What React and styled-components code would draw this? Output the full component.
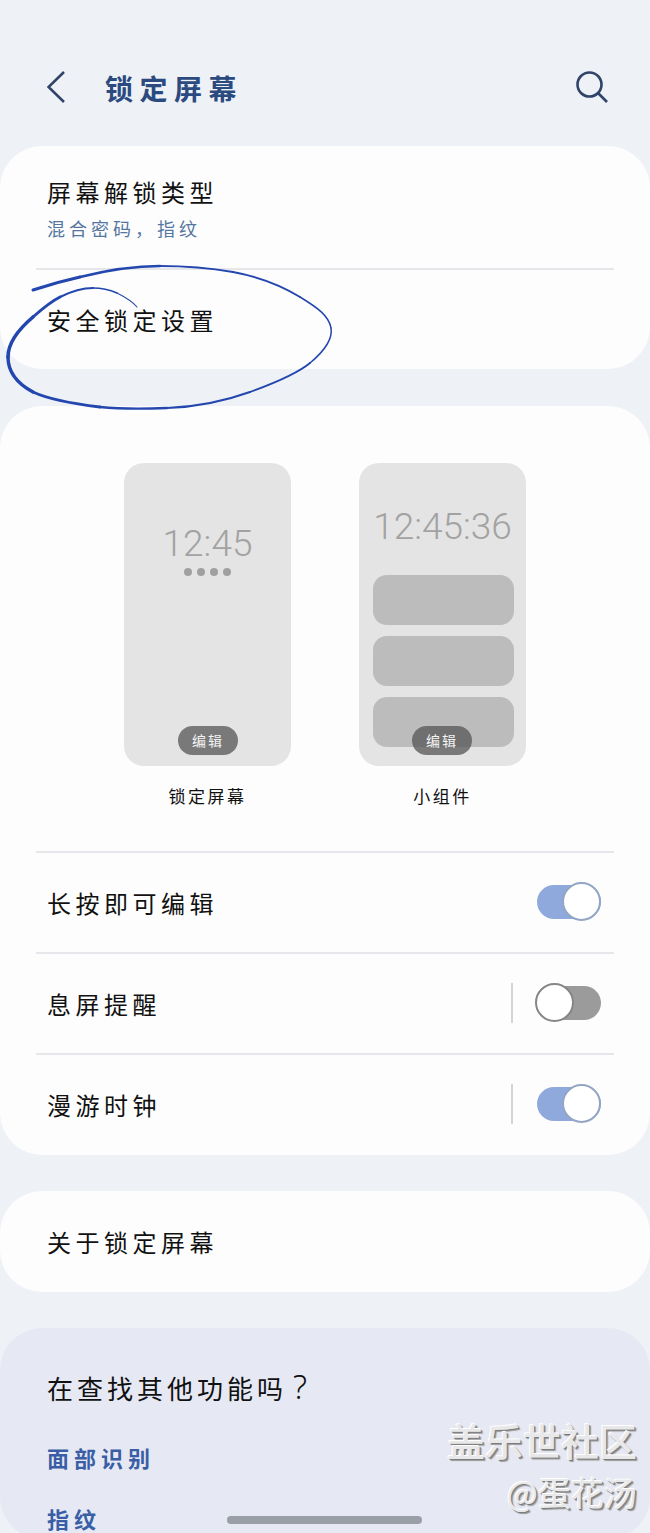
import React from 'react';
import styled, { createGlobalStyle } from 'styled-components';

const GlobalStyle = createGlobalStyle`
  html, body {
    margin: 0;
    padding: 0;
    background: #eef1f6;
  }
  body {
    font-family: "Noto Sans CJK SC", "Noto Sans", sans-serif;
  }
`;

// pen stroke pieces, the width changes along the line
const scribbleParts = [
  [3, 'M33 290 C48 285 62 281 80 277'],
  [2.6, 'M80 277 C100 272 130 266 160 266'],
  [2.2, 'M160 266 C185 266 210 268 233 272'],
  [1.8, 'M233 272 C260 277 282 286 300 297'],
  [1.5, 'M300 297 C318 308 329 316 331 328'],
  [1.5, 'M331 328 C333 340 322 353 310 363'],
  [1.8, 'M310 363 C298 373 272 384 250 392'],
  [2.1, 'M250 392 C225 401 196 407 167 408'],
  [2.4, 'M167 408 C143 409 120 409 100 407'],
  [2.8, 'M100 407 C75 404 50 400 33 392'],
  [3.4, 'M33 392 C18 384 8 372 8 357'],
  [3.6, 'M8 357 C8 343 20 328 33 317'],
  [3, 'M33 317 C42 309 50 302 60 297'],
  [2.2, 'M60 297 C70 292 82 288 93 288'],
  [1.6, 'M93 288 C101 288 110 290 117 293'],
  [1.1, 'M117 293 C125 297 132 301 137 307'],
];

const Toggle = ({ on }) => (
  <ToggleTrack $on={on}>
    <ToggleThumb $on={on} />
  </ToggleTrack>
);

const SwitchRow = ({ label, on, separated }) => (
  <SwitchRowWrap>
    <RowTitle>{label}</RowTitle>
    <SwitchSide>
      {separated && <VerticalLine />}
      <Toggle on={on} />
    </SwitchSide>
  </SwitchRowWrap>
);

const App = () => {
  return (
    <Page>
      <GlobalStyle />
      <Header>
        <BackIcon viewBox="0 0 18 32">
          <path d="M17 1 L1.5 16 L17 31" />
        </BackIcon>
        <Title>锁定屏幕</Title>
        <SearchIcon viewBox="0 0 32 32">
          <circle cx="13.5" cy="13.5" r="12" />
          <path d="M22 22 L31 31" />
        </SearchIcon>
      </Header>

      <Card>
        <UnlockRow>
          <RowTitle>屏幕解锁类型</RowTitle>
          <RowSub>混合密码，指纹</RowSub>
        </UnlockRow>
        <Divider />
        <SecureRow>
          <RowTitle>安全锁定设置</RowTitle>
        </SecureRow>
      </Card>

      <PreviewCard>
        <Previews>
          <PreviewItem>
            <Phone>
              <LockTime>12:45</LockTime>
              <Dots>
                <Dot />
                <Dot />
                <Dot />
                <Dot />
              </Dots>
              <EditPill $left={54}>编辑</EditPill>
            </Phone>
            <PreviewLabel>锁定屏幕</PreviewLabel>
          </PreviewItem>
          <PreviewItem>
            <Phone>
              <WidgetTime>12:45:36</WidgetTime>
              <Widgets>
                <Widget />
                <Widget />
                <Widget />
              </Widgets>
              <EditPill $left={53}>编辑</EditPill>
            </Phone>
            <PreviewLabel>小组件</PreviewLabel>
          </PreviewItem>
        </Previews>
        <Divider />
        <SwitchRow label="长按即可编辑" on />
        <Divider />
        <SwitchRow label="息屏提醒" separated />
        <Divider />
        <SwitchRow label="漫游时钟" on separated />
      </PreviewCard>

      <Card>
        <AboutRow>
          <RowTitle>关于锁定屏幕</RowTitle>
        </AboutRow>
      </Card>

      <LinksCard>
        <LinksTitle>
          在查找其他功能吗<QuestionMark>?</QuestionMark>
        </LinksTitle>
        <LinkList>
          <LinkText>面部识别</LinkText>
          <LinkText>指纹</LinkText>
        </LinkList>
      </LinksCard>

      <Scribble viewBox="0 0 650 420">
        {scribbleParts.map(([w, d]) => (
          <ScribblePath key={d} $w={w} d={d} />
        ))}
      </Scribble>

      <Watermark>
        <WatermarkMain>盖乐世社区</WatermarkMain>
        <WatermarkSub>@蛋花汤</WatermarkSub>
      </Watermark>
      <HomeBar />
    </Page>
  );
};

export default App;

const Page = styled.div`
  position: relative;
  width: 650px;
  height: 1533px;
  overflow: hidden;
  background: #eef1f6;
`;

const Header = styled.header`
  display: flex;
  align-items: center;
  height: 146px;
  padding: 28px 42px 0 47px;
  box-sizing: border-box;
`;

const BackIcon = styled.svg`
  width: 18px;
  height: 32px;
  fill: none;
  stroke: #2f4468;
  stroke-width: 2.6;
`;

const Title = styled.h1`
  margin: 2px 0 0 40px;
  font-size: 28px;
  font-weight: 700;
  letter-spacing: 6.5px;
  color: #2b4a80;
`;

const SearchIcon = styled.svg`
  width: 32px;
  height: 32px;
  margin-left: auto;
  fill: none;
  stroke: #2f4468;
  stroke-width: 2.6;
`;

const Card = styled.section`
  background: #fdfdfe;
  border-radius: 42px;
  overflow: hidden;
`;

const Divider = styled.div`
  height: 2px;
  margin: 0 36px;
  background: #e6e7ea;
`;

const UnlockRow = styled.div`
  display: flex;
  flex-direction: column;
  justify-content: center;
  height: 122px;
  padding: 2px 47px 0;
  box-sizing: border-box;
`;

const SecureRow = styled.div`
  display: flex;
  align-items: center;
  height: 99px;
  padding: 0 47px;
  box-sizing: border-box;
`;

const AboutRow = styled.div`
  display: flex;
  align-items: center;
  height: 101px;
  padding: 0 47px;
  box-sizing: border-box;
`;

const RowTitle = styled.div`
  font-size: 24px;
  line-height: 34px;
  letter-spacing: 4.5px;
  color: #111;
`;

const RowSub = styled.div`
  margin-top: 6px;
  font-size: 18px;
  line-height: 26px;
  letter-spacing: 4px;
  color: #55779f;
`;

const PreviewCard = styled.section`
  margin: 37px 0 36px;
  padding: 57px 0 1px;
  background: #fdfdfe;
  border-radius: 42px;
  overflow: hidden;
`;

const Previews = styled.div`
  display: flex;
  justify-content: center;
  gap: 68px;
  height: 388px;
`;

const PreviewItem = styled.div`
  display: flex;
  flex-direction: column;
  align-items: center;
`;

const Phone = styled.div`
  position: relative;
  display: flex;
  flex-direction: column;
  align-items: center;
  width: 167px;
  height: 303px;
  background: #e4e4e4;
  border-radius: 20px;
`;

const LockTime = styled.div`
  margin-top: 56px;
  font-family: Roboto, sans-serif;
  font-weight: 300;
  font-size: 37px;
  line-height: 50px;
  color: #a2a2a2;
`;

const Dots = styled.div`
  display: flex;
  gap: 5px;
  margin-top: -1px;
`;

const Dot = styled.span`
  width: 8px;
  height: 8px;
  border-radius: 50%;
  background: #a0a0a0;
`;

const WidgetTime = styled.div`
  margin-top: 39px;
  font-family: Roboto, sans-serif;
  font-weight: 300;
  font-size: 37px;
  line-height: 50px;
  color: #a2a2a2;
`;

const Widgets = styled.div`
  display: flex;
  flex-direction: column;
  gap: 11px;
  margin: 23px 0 0 2px;
`;

const Widget = styled.div`
  width: 141px;
  height: 50px;
  background: #bcbcbc;
  border-radius: 14px;
`;

const EditPill = styled.div`
  position: absolute;
  left: ${({ $left }) => $left}px;
  bottom: 11px;
  width: 60px;
  height: 29px;
  border-radius: 15px;
  background: rgba(85, 85, 85, 0.75);
  color: #f4f4f4;
  font-size: 14px;
  line-height: 29px;
  letter-spacing: 2px;
  text-align: center;
`;

const PreviewLabel = styled.div`
  margin-top: 17px;
  font-size: 17px;
  line-height: 26px;
  letter-spacing: 2.5px;
  color: #111;
`;

const SwitchRowWrap = styled.div`
  display: flex;
  align-items: center;
  justify-content: space-between;
  height: 99px;
  padding: 0 49px 0 47px;
  box-sizing: border-box;
`;

const SwitchSide = styled.div`
  display: flex;
  align-items: center;
  margin-bottom: 2px;
`;

const VerticalLine = styled.span`
  width: 2px;
  height: 40px;
  margin-right: 24px;
  background: #d4d4d6;
`;

const ToggleTrack = styled.div`
  position: relative;
  width: 64px;
  height: 34px;
  border-radius: 17px;
  background: ${({ $on }) => ($on ? '#8fa9dd' : '#9b9b9b')};
`;

const ToggleThumb = styled.span`
  position: absolute;
  top: -3px;
  ${({ $on }) => ($on ? 'right: 0;' : 'left: -2px;')}
  width: 39px;
  height: 39px;
  box-sizing: border-box;
  border-radius: 50%;
  background: #fff;
  border: 2px solid ${({ $on }) => ($on ? '#93a5c4' : '#868686')};
`;

const LinksCard = styled.section`
  height: 211px;
  margin-top: 36px;
  padding: 40px 47px 0;
  box-sizing: border-box;
  background: #e6e9f3;
  border-radius: 42px;
`;

const LinksTitle = styled.div`
  font-size: 26px;
  line-height: 38px;
  letter-spacing: 4px;
  color: #111;
`;

const QuestionMark = styled.span`
  margin-left: 6px;
  font-family: "Noto Sans", sans-serif;
  font-size: 33px;
  font-weight: 300;
`;

const LinkList = styled.div`
  display: flex;
  flex-direction: column;
  gap: 37px;
  margin-top: 38px;
`;

const LinkText = styled.div`
  height: 24px;
  font-size: 22px;
  font-weight: 700;
  line-height: 24px;
  letter-spacing: 5px;
  color: #3a5ea6;
`;

const Scribble = styled.svg`
  position: absolute;
  top: 0;
  left: 0;
  width: 650px;
  height: 420px;
  fill: none;
  pointer-events: none;
`;

const ScribblePath = styled.path`
  stroke: #2347ae;
  stroke-width: ${({ $w }) => $w};
  stroke-linecap: round;
`;

const Watermark = styled.div`
  position: absolute;
  right: 13px;
  top: 1415px;
  text-align: right;
  color: #e8e8ea;
  text-shadow: -1px -1px 0 #fff, 1px 1px 0 #7c7c7c, 2px 2px 1px #9a9a9a;
`;

const WatermarkMain = styled.div`
  font-size: 38px;
  font-weight: 500;
  line-height: 50px;
`;

const WatermarkSub = styled.div`
  margin-top: 7px;
  font-size: 33px;
  line-height: 40px;
`;

const HomeBar = styled.div`
  position: absolute;
  left: 227px;
  top: 1516px;
  width: 195px;
  height: 8px;
  border-radius: 4px;
  background: #9a9ea6;
`;
